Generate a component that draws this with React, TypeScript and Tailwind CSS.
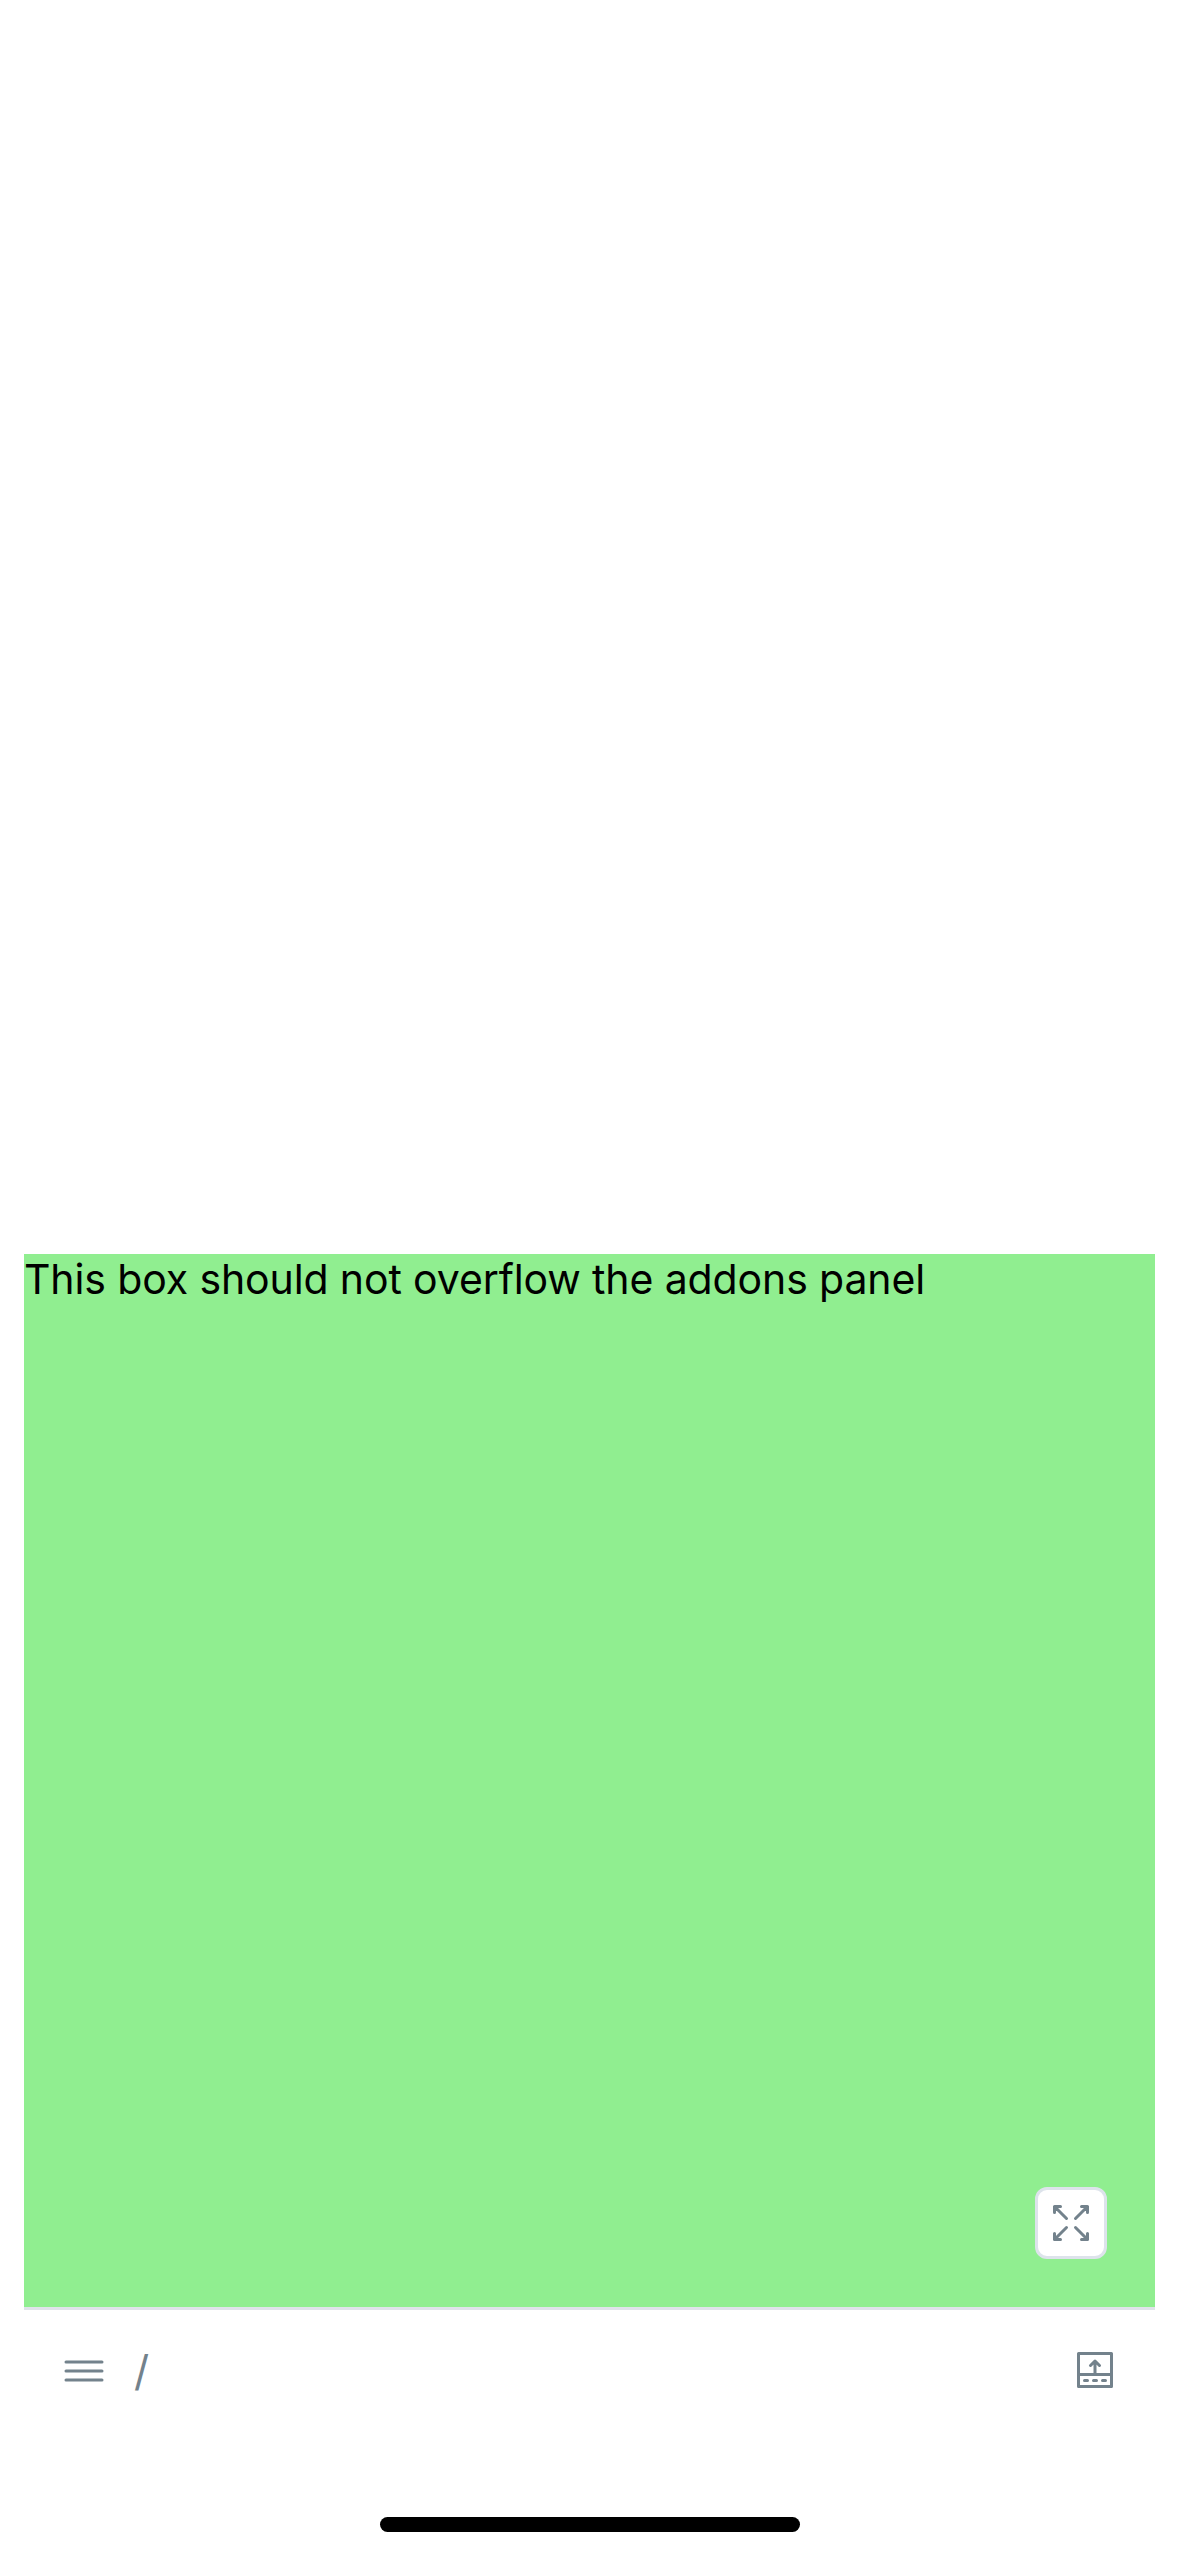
const MenuIcon = () => (
  <svg viewBox="0 0 14 14" className="mt-0.5 size-[42px]" fill="none" stroke="currentColor" strokeLinecap="round">
    <path d="M1 4h12M1 7h12M1 10h12" />
  </svg>
);

const ExpandIcon = () => (
  <svg viewBox="0 0 14 14" className="size-[42px]" fill="none" stroke="currentColor" strokeLinecap="round" strokeLinejoin="round">
    <path d="M3.5 1.5h-2v2M1.5 1.5l4 4M10.5 1.5h2v2M12.5 1.5l-4 4M3.5 12.5h-2v-2M1.5 12.5l4-4M10.5 12.5h2v-2M12.5 12.5l-4-4" />
  </svg>
);

const BottomPanelIcon = () => (
  <svg viewBox="0 0 14 14" className="size-[42px]" fill="none" stroke="currentColor" strokeLinecap="round" strokeLinejoin="round">
    <path d="M1.5 1.5h11v11h-11zM1.5 8.5h11" />
    <path d="M3.5 10.5h1M6.5 10.5h1M9.5 10.5h1" />
    <path d="M5.5 5.5L7 4l1.5 1.5M7 4v4" />
  </svg>
);

export default function App() {
  return (
    <div className="flex h-[2556px] w-[1178px] flex-col bg-white pt-[1254px] font-['Inter',sans-serif]">
      <main className="mr-[23px] ml-6 flex h-[1053px] flex-col justify-between bg-[#90ee90]">
        <p className="text-[41px] leading-[50px] tracking-[-0.12px] whitespace-nowrap text-black">
          This box should not overflow the addons panel
        </p>
        <button
          aria-label="Expand"
          className="mr-12 mb-12 flex size-[72px] items-center justify-center self-end rounded-xl border-[3px] border-[#dde3eb] bg-white text-[#73828c]"
        >
          <ExpandIcon />
        </button>
      </main>
      <nav className="mr-[23px] ml-6 flex h-[123px] items-center justify-between border-t-[3px] border-[#dfe3ea] px-[39px] text-[#73828c]">
        <button className="flex items-center gap-[29px]">
          <MenuIcon />
          <span className="text-[42px] leading-[51px]">/</span>
        </button>
        <button aria-label="Show addons">
          <BottomPanelIcon />
        </button>
      </nav>
      <div className="mt-[87px] ml-[380px] h-[15px] w-[420px] rounded-full bg-black" />
    </div>
  );
}
